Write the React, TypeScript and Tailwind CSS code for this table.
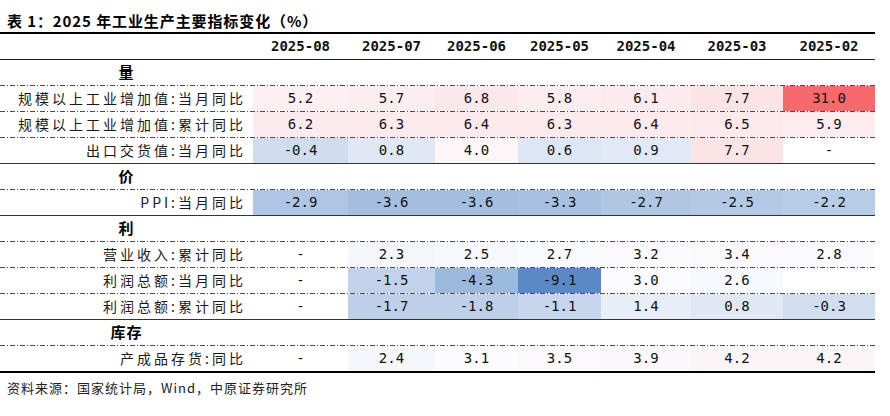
import React from 'react';

type Cell = number | string;

interface Row {
  label: string;
  values: Cell[];
}

interface Section {
  title: string;
  rows: Row[];
}

const months = ['2025-08', '2025-07', '2025-06', '2025-05', '2025-04', '2025-03', '2025-02'];

// largura de cada coluna de valores
const colWidths = ['w-[95px]', 'w-[87px]', 'w-[83px]', 'w-[83px]', 'w-[90px]', 'w-[92px]', 'w-[92px]'];

const sections: Section[] = [
  {
    title: '量',
    rows: [
      { label: '规模以上工业增加值:当月同比', values: [5.2, 5.7, 6.8, 5.8, 6.1, 7.7, 31.0] },
      { label: '规模以上工业增加值:累计同比', values: [6.2, 6.3, 6.4, 6.3, 6.4, 6.5, 5.9] },
      { label: '出口交货值:当月同比', values: [-0.4, 0.8, 4.0, 0.6, 0.9, 7.7, '-'] },
    ],
  },
  {
    title: '价',
    rows: [{ label: 'PPI:当月同比', values: [-2.9, -3.6, -3.6, -3.3, -2.7, -2.5, -2.2] }],
  },
  {
    title: '利',
    rows: [
      { label: '营业收入:累计同比', values: ['-', 2.3, 2.5, 2.7, 3.2, 3.4, 2.8] },
      { label: '利润总额:当月同比', values: ['-', -1.5, -4.3, -9.1, 3.0, 2.6, ''] },
      { label: '利润总额:累计同比', values: ['-', -1.7, -1.8, -1.1, 1.4, 0.8, -0.3] },
    ],
  },
  {
    title: '库存',
    rows: [{ label: '产成品存货:同比', values: ['-', 2.4, 3.1, 3.5, 3.9, 4.2, 4.2] }],
  },
];

// escala de 3 cores (azul - branco - vermelho), ponto médio ~ mediana
const MIN = -9.1;
const MID = 2.9;
const MAX = 31.0;
const WHITE = [252, 252, 255];
const BLUE = [90, 138, 198];
const RED = [248, 105, 107];

const mix = (a: number[], b: number[], t: number) =>
  `rgb(${a.map((v, i) => Math.round(v + (b[i] - v) * t)).join(',')})`;

const cellColor = (v: Cell): string | undefined => {
  if (typeof v !== 'number') return undefined;
  if (v <= MID) return mix(WHITE, BLUE, Math.min(1, (MID - v) / (MID - MIN)));
  return mix(WHITE, RED, Math.min(1, (v - MID) / (MAX - MID)));
};

const DashLine = () => (
  <div className="h-[1px] w-full bg-[repeating-linear-gradient(90deg,#4b4b4b_0_5px,transparent_5px_7px,#4b4b4b_7px_8px,transparent_8px_10px)]" />
);

const DataRow: React.FC<{ row: Row }> = ({ row }) => (
  <div className="flex h-[25px]">
    <div className="w-[253px] flex items-center justify-end pr-[7px] text-[14px] tracking-[3px] text-[#1a1a1a] font-['Noto_Sans_CJK_SC',sans-serif]">
      {row.label}
    </div>
    {row.values.map((v, i) => (
      <div
        key={i}
        className={`${colWidths[i]} flex items-center justify-center text-[14px] text-[#111] font-['DejaVu_Sans_Mono',monospace]`}
        style={{ backgroundColor: cellColor(v) }}
      >
        {typeof v === 'number' ? v.toFixed(1) : v}
      </div>
    ))}
  </div>
);

const SectionBlock: React.FC<{ section: Section; last: boolean }> = ({ section, last }) => (
  <div>
    <div className="flex h-[25px]">
      <div className="w-[253px] flex items-center justify-center text-[15px] font-bold tracking-[1px] text-black font-['Noto_Sans_CJK_SC',sans-serif]">
        {section.title}
      </div>
    </div>
    <DashLine />
    {section.rows.map((row, i) => (
      <React.Fragment key={row.label}>
        <DataRow row={row} />
        {i < section.rows.length - 1 ? (
          <DashLine />
        ) : last ? (
          <div className="h-[2px] bg-black" />
        ) : (
          <div className="h-[1px] bg-[#333]" />
        )}
      </React.Fragment>
    ))}
  </div>
);

const App: React.FC = () => {
  return (
    <div className="w-[890px] h-[416px] bg-white">
      <div className="w-[875px]">
        {/* título */}
        <div className="h-[32px] pt-[12px] pl-[7px] leading-[18px] text-[15px] font-bold tracking-[0.9px] text-black font-['Noto_Sans_CJK_SC',sans-serif]">
          表 1：2025 年工业生产主要指标变化（%）
        </div>
        <div className="h-[2px] bg-black" />

        {/* cabeçalho */}
        <div className="flex h-[25px]">
          <div className="w-[253px]" />
          {months.map((m, i) => (
            <div
              key={m}
              className={`${colWidths[i]} flex items-center justify-center text-[14px] font-bold text-[#111] font-['DejaVu_Sans_Mono',monospace]`}
            >
              {m}
            </div>
          ))}
        </div>
        <div className="h-[1px] bg-[#222]" />

        {sections.map((s, i) => (
          <SectionBlock key={s.title} section={s} last={i === sections.length - 1} />
        ))}

        {/* fonte */}
        <div className="pt-[6px] pl-[7px] leading-[18px] text-[13px] tracking-[1px] text-[#222] font-['Noto_Sans_CJK_SC',sans-serif]">
          资料来源：国家统计局，Wind，中原证券研究所
        </div>
      </div>
    </div>
  );
};

export default App;
